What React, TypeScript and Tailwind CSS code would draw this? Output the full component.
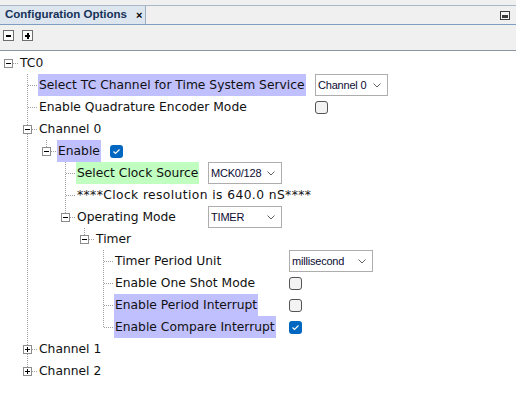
import React from 'react'

type Cell = 'pipe' | 'none'

const LINE = '#a0a0a0'

function Gutter({ kind }: { kind: Cell }) {
    return (
        <svg width="19" height="22" className="shrink-0 block" shapeRendering="crispEdges">
            {kind === 'pipe' && <line x1="8.5" y1="0" x2="8.5" y2="22" stroke={LINE} strokeDasharray="1 1" />}
        </svg>
    )
}

function Handle({ root, last, box }: { root?: boolean; last?: boolean; box?: 'minus' | 'plus' }) {
    return (
        <svg width="19" height="22" className="shrink-0 block" shapeRendering="crispEdges">
            {!root && <line x1="8.5" y1="0" x2="8.5" y2={last ? 11 : 22} stroke={LINE} strokeDasharray="1 1" />}
            <line x1={box ? 13 : 9} y1="11.5" x2="19" y2="11.5" stroke={LINE} strokeDasharray="1 1" />
            {box && (
                <>
                    <rect x="4.5" y="7.5" width="8" height="8" fill="#fff" stroke="#8c8c8c" />
                    <line x1="6" y1="11.5" x2="11" y2="11.5" stroke="#000" />
                    {box === 'plus' && <line x1="8.5" y1="9" x2="8.5" y2="14" stroke="#000" />}
                </>
            )}
        </svg>
    )
}

function Select({ value, width }: { value: string; width: string }) {
    return (
        <div className={`${width} h-[22px] shrink-0 flex items-center justify-between bg-white border border-[#adadad] pl-[2px] pr-[6px] text-[11px] tracking-[-0.2px] text-[#0b0b33] font-['Liberation_Sans',sans-serif]`}>
            <span className="whitespace-nowrap">{value}</span>
            <svg width="8" height="5" viewBox="0 0 8 5" className="block shrink-0">
                <polyline points="0.5,0.5 4,4 7.5,0.5" fill="none" stroke="#606060" strokeWidth="1" />
            </svg>
        </div>
    )
}

function Check({ on }: { on?: boolean }) {
    return on ? (
        <div className="w-[13px] h-[13px] rounded-[3px] bg-[#0067c0] flex items-center justify-center shrink-0">
            <svg width="9" height="7" viewBox="0 0 9 7" className="block">
                <polyline points="1.5,3.5 3.5,5.5 7.5,1.5" fill="none" stroke="#fff" strokeWidth="1.1" />
            </svg>
        </div>
    ) : (
        <div className="w-[13px] h-[13px] rounded-[3px] bg-[#f3f3f3] border border-[#545454] shrink-0" />
    )
}

function Row({
    gutters = [],
    root,
    last,
    box,
    label,
    hl,
    labelW,
    wide,
    children,
}: {
    gutters?: Cell[]
    root?: boolean
    last?: boolean
    box?: 'minus' | 'plus'
    label: string
    hl?: 'blue' | 'green'
    labelW?: string
    wide?: boolean
    children?: React.ReactNode
}) {
    const bg = hl === 'blue' ? 'bg-[#c0c0ff]' : hl === 'green' ? 'bg-[#c0ffc0]' : ''
    return (
        <div className="flex items-center h-[22px]">
            {gutters.map((g, i) => (
                <Gutter key={i} kind={g} />
            ))}
            <Handle root={root} last={last} box={box} />
            <div className={`${labelW ?? ''} shrink-0 flex items-center h-full`}>
                <span className={`${bg} ${wide ? 'tracking-[0.4px]' : ''} h-full flex items-center px-px whitespace-nowrap`}>{label}</span>
            </div>
            {children}
        </div>
    )
}

export default function App() {
    const l1: Cell[] = ['none']
    const l3: Cell[] = ['none', 'pipe', 'none']
    const l5: Cell[] = ['none', 'pipe', 'none', 'none', 'none']
    return (
        <div className="w-[516px] h-[416px] bg-white overflow-hidden flex flex-col">
            {/* view header */}
            <div className="h-[5px] bg-[#f0f0f0]" />
            <div className="h-px bg-[#a9b7c6]" />
            <div className="h-[18px] flex bg-[#f0f0f0]">
                <div className="w-[146px] bg-[#dde5ee] border-r border-[#9aaec2] flex items-center pl-[5px] gap-[9px] font-['Liberation_Sans',sans-serif] font-bold text-[11.5px] text-[#15325a]">
                    <span>Configuration Options</span>
                    <span className="text-black text-[11px]">×</span>
                </div>
                <div className="flex-1 flex items-center justify-end pr-[6px]">
                    <svg width="10" height="9" viewBox="0 0 10 9" className="block" shapeRendering="crispEdges">
                        <rect x="0.5" y="0.5" width="9" height="8" fill="#f4f4f4" stroke="#3c3c3c" />
                        <rect x="2" y="4" width="6" height="3" fill="#3c3c3c" />
                    </svg>
                </div>
            </div>
            <div className="h-px bg-[#7f9fc0]" />
            <div className="h-[25px] bg-[#f0f0f0] flex items-start pt-[5px] pl-[3px] gap-[8px]">
                {['minus', 'plus'].map((k) => (
                    <svg key={k} width="11" height="11" viewBox="0 0 11 11" className="block" shapeRendering="crispEdges">
                        <rect x="0.5" y="0.5" width="10" height="10" fill="#fbfbfb" stroke="#6e6e6e" />
                        <rect x="3" y="5" width="5" height="2" fill="#000" />
                        {k === 'plus' && <rect x="4.5" y="3" width="2" height="6" fill="#000" />}
                    </svg>
                ))}
            </div>
            <div className="h-px bg-[#8c96a0]" />

            {/* tree */}
            <div className="pt-px font-['DejaVu_Sans',sans-serif] text-[12.3px] text-[#111]">
                <Row root box="minus" label="TC0" />
                <Row gutters={l1} label="Select TC Channel for Time System Service" hl="blue" labelW="w-[277px]">
                    <Select value="Channel 0" width="w-[73px]" />
                </Row>
                <Row gutters={l1} label="Enable Quadrature Encoder Mode" labelW="w-[277px]">
                    <Check />
                </Row>
                <Row gutters={l1} box="minus" label="Channel 0" />
                <Row gutters={['none', 'pipe']} last box="minus" label="Enable" hl="blue" labelW="w-[53px]">
                    <Check on />
                </Row>
                <Row gutters={l3} label="Select Clock Source" hl="green" labelW="w-[132px]">
                    <Select value="MCK0/128" width="w-[74px]" />
                </Row>
                <Row gutters={l3} wide label="****Clock resolution is 640.0 nS****" />
                <Row gutters={l3} last box="minus" label="Operating Mode" labelW="w-[132px]">
                    <Select value="TIMER" width="w-[74px]" />
                </Row>
                <Row gutters={['none', 'pipe', 'none', 'none']} last box="minus" label="Timer" />
                <Row gutters={l5} label="Timer Period Unit" labelW="w-[175px]">
                    <Select value="millisecond" width="w-[84px]" />
                </Row>
                <Row gutters={l5} label="Enable One Shot Mode" labelW="w-[175px]">
                    <Check />
                </Row>
                <Row gutters={l5} label="Enable Period Interrupt" hl="blue" labelW="w-[175px]">
                    <Check />
                </Row>
                <Row gutters={l5} last label="Enable Compare Interrupt" hl="blue" labelW="w-[175px]">
                    <Check on />
                </Row>
                <Row gutters={l1} box="plus" label="Channel 1" />
                <Row gutters={l1} last box="plus" label="Channel 2" />
            </div>
        </div>
    )
}
